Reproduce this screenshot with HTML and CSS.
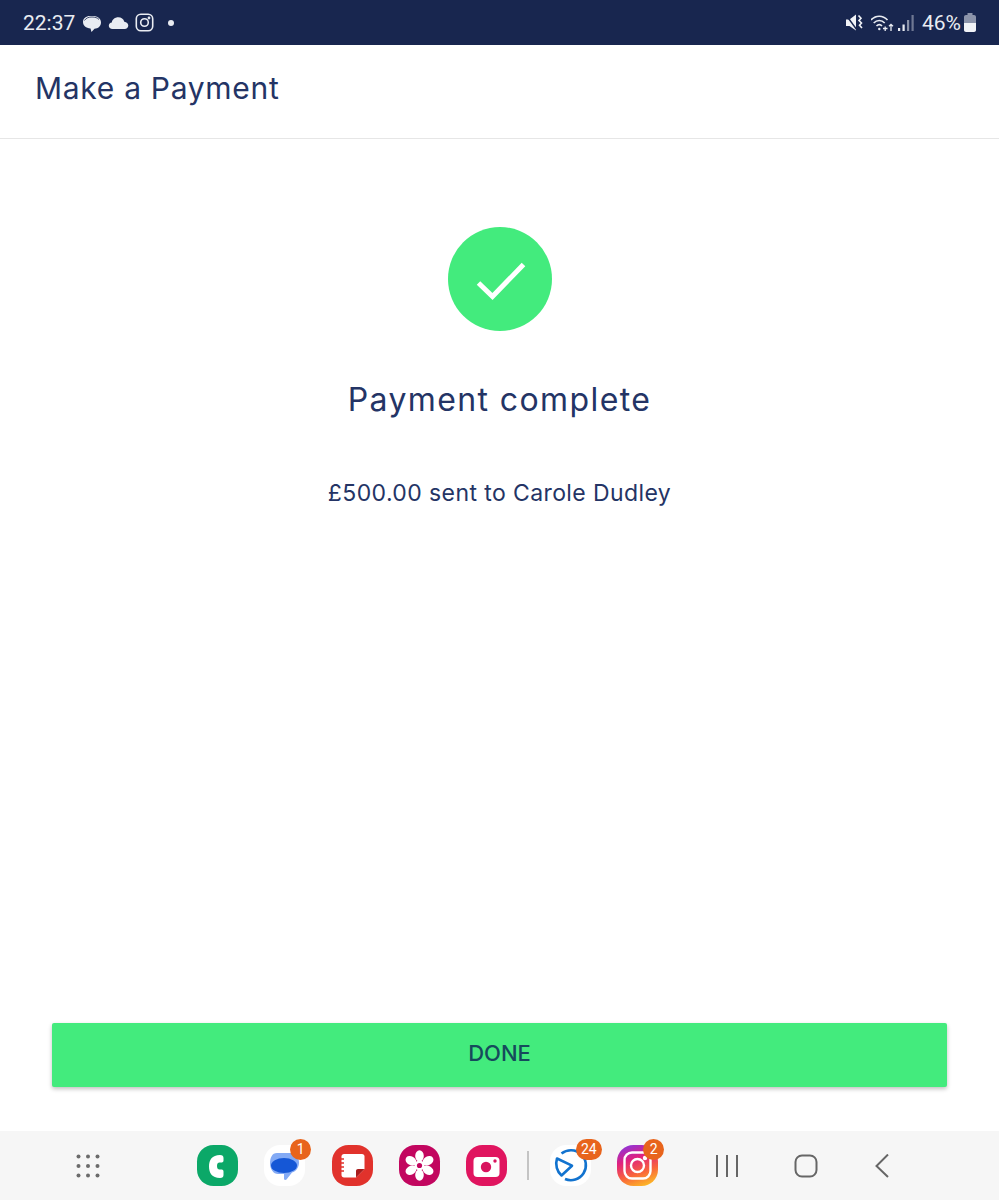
FILE: index.html
```html
<!DOCTYPE html>
<html lang="en">
<head>
  <meta charset="UTF-8" />
  <meta name="viewport" content="width=device-width, initial-scale=1" />
  <title>Make a Payment</title>
  <link rel="stylesheet" href="styles.css">
</head>
<body>
  <div class="status-bar">
    <div class="status-left">
      <span class="clock">22:37</span>
      <svg class="st-icon" width="20" height="20" viewBox="0 0 20 20">
        <path d="M1 9c0-3.500 3-6 7-6h3c4.500 0 8 2.500 8 6.500 0 3.800-3 6-6.500 6.200L9.500 19l-1-3.500C4 15 1 12.500 1 9z" fill="#e9ecf2"/>
        <path d="M2.500 7.500C4 4.800 7 4 10 4s5.500.8 7 2.500" fill="none" stroke="#18264f" stroke-width=".8"/>
      </svg>
      <svg class="st-icon" width="21" height="14" viewBox="0 0 21 14">
        <path d="M4.500 13C2.300 13 .8 11.500.8 9.700c0-1.700 1.300-3 3-3.200C4.300 3.500 7 1.300 10.300 1.300c2.900 0 5.300 1.800 6 4.400 2.300.2 4 1.800 4 3.900 0 1.900-1.500 3.400-3.700 3.400z" fill="#e9ecf2"/>
      </svg>
      <svg class="st-icon" width="19" height="19" viewBox="0 0 19 19" fill="none" stroke="#e9ecf2" stroke-width="1.600">
        <rect x="1.300" y="1.300" width="16.400" height="16.400" rx="4.500"/>
        <circle cx="9.500" cy="9.500" r="3.800"/>
        <circle cx="14" cy="5" r=".6" fill="#e9ecf2"/>
      </svg>
      <span class="dot"></span>
    </div>
    <div class="status-right">
      <svg width="17" height="17" viewBox="0 0 17 17">
        <path d="M0 5.500h3.500L10 .5v16L3.500 12H0z" fill="#f1f3f7"/>
        <path d="M0 1l11 15" stroke="#18264f" stroke-width="1.400"/>
        <path d="M12.500 1.500l2.500 2.800-2 2.200 2.500 2.500-2 2.200 2.500 2.800" fill="none" stroke="#f1f3f7" stroke-width="1.600"/>
      </svg>
      <svg class="wifi" width="23" height="18" viewBox="0 0 23 18" fill="none" stroke="#e9ecf2" stroke-width="1.600">
        <path d="M0 6c4.700-5 11.800-5 16.500 0"/>
        <path d="M2.700 9c3.200-3.300 7.900-3.300 11 0"/>
        <path d="M5.500 12c1.800-1.800 3.900-1.800 5.500 0"/>
        <circle cx="8.300" cy="15" r="1.200" fill="#e9ecf2" stroke="none"/>
        <path d="M12 14.500h4.500M14.200 12.500v4.500M20 17v-6.500M18 12.300l2-2 2 2" stroke-width="1.300"/>
      </svg>
      <svg class="signal" width="16" height="18" viewBox="0 0 16 18">
        <rect x="0" y="14" width="2.200" height="3" fill="#e9ecf2"/>
        <rect x="4.500" y="10.500" width="2.200" height="6.500" fill="#e9ecf2"/>
        <rect x="9" y="6" width="2.200" height="11" fill="#8b93a9"/>
        <rect x="13.500" y="1" width="2.200" height="16" fill="#6f7893"/>
      </svg>
      <span class="battery-text">46%</span>
      <svg class="battery" width="12" height="19" viewBox="0 0 12 19">
        <path d="M3.500 0h5v2H10c1.200 0 2 .8 2 2v6H0V4c0-1.200.8-2 2-2h1.500z" fill="#8c94aa"/>
        <path d="M0 10h12v7c0 1.200-.8 2-2 2H2c-1.200 0-2-.8-2-2z" fill="#f1f3f7"/>
      </svg>
    </div>
  </div>

  <header class="app-header">
    <h1>Make a Payment</h1>
  </header>

  <main class="content">
    <div class="success-circle">
      <svg width="104" height="104" viewBox="0 0 104 104">
        <path d="M30.500 56l14 13.500 31-32" fill="none" stroke="#fff" stroke-width="5"/>
      </svg>
    </div>
    <h2>Payment complete</h2>
    <p>£500.00 sent to Carole Dudley</p>
    <button type="button" class="done-btn">DONE</button>
  </main>

  <nav class="nav-bar">
    <svg class="apps" width="26" height="26" viewBox="0 0 26 26" fill="#6b6b6b">
      <circle cx="3.500" cy="3.500" r="2"/><circle cx="13" cy="3.500" r="2"/><circle cx="22.500" cy="3.500" r="2"/>
      <circle cx="3.500" cy="13" r="2"/><circle cx="13" cy="13" r="2"/><circle cx="22.500" cy="13" r="2"/>
      <circle cx="3.500" cy="22.500" r="2"/><circle cx="13" cy="22.500" r="2"/><circle cx="22.500" cy="22.500" r="2"/>
    </svg>

    <div class="dock">
      <div class="app app-phone">
        <svg width="41" height="41" viewBox="0 0 41 41">
          <path d="M23 10C15 10 12 15 12 21.500S15 33 23 33c2.500 0 3.500-1 3.500-3v-3.500c0-1.500-1-2-2.500-2h-1.500c-1.500 0-2.500-1-2.500-3.500s1-3.500 2.500-3.500H24c1.500 0 2.500-.5 2.500-2V13c0-2-1-3-3.500-3z" fill="#fff"/>
        </svg>
      </div>
      <div class="app app-messages">
        <svg width="41" height="41" viewBox="0 0 41 41">
          <path d="M13 8h14c5 0 8 4 8 9.500 0 5-3 9-7 10l-5.500 7c-1 .9-2.500.5-2.500-1V29h-6c-4.500 0-8-5-8-10.500S8 8 13 8z" fill="#83aaf5"/>
          <ellipse cx="20" cy="20.500" rx="13" ry="7.500" fill="#1557d6"/>
        </svg>
        <span class="badge">1</span>
      </div>
      <div class="app app-notes">
        <svg width="41" height="41" viewBox="0 0 41 41">
          <path d="M12 9h18c1.500 0 2.500 1 2.500 2.500V24L24 32.500H12c-1.500 0-2.500-1-2.500-2.500V11.500C9.500 10 10.500 9 12 9z" fill="#fff"/>
          <path d="M32.500 24H26c-1.200 0-2 .8-2 2v6.500z" fill="#a81c1c"/>
          <path d="M9 14h3M9 18h3M9 22h3M9 26h3" stroke="#e1322c" stroke-width="1.400"/>
        </svg>
      </div>
      <div class="app app-gallery">
        <svg width="41" height="41" viewBox="0 0 41 41" fill="#fff">
          <ellipse cx="20.500" cy="11" rx="4.300" ry="5.800"/>
          <ellipse cx="20.500" cy="30" rx="4.300" ry="5.800"/>
          <ellipse cx="12" cy="15.800" rx="5.800" ry="4.300" transform="rotate(30 12 15.800)"/>
          <ellipse cx="29" cy="15.800" rx="5.800" ry="4.300" transform="rotate(-30 29 15.800)"/>
          <ellipse cx="12" cy="25.200" rx="5.800" ry="4.300" transform="rotate(-30 12 25.200)"/>
          <ellipse cx="29" cy="25.200" rx="5.800" ry="4.300" transform="rotate(30 29 25.200)"/>
          <circle cx="20.500" cy="20.500" r="5"/>
          <circle cx="20.500" cy="20.500" r="2.600" fill="#c2065f"/>
        </svg>
      </div>
      <div class="app app-camera">
        <svg width="41" height="41" viewBox="0 0 41 41">
          <rect x="7.500" y="12" width="26" height="20" rx="4" fill="#fff"/>
          <circle cx="20" cy="22" r="5.200" fill="#d8145e"/>
          <circle cx="29" cy="16" r="1.700" fill="#d8145e"/>
        </svg>
      </div>
      <span class="dock-divider"></span>
      <div class="app app-pie">
        <svg width="41" height="41" viewBox="0 0 41 41" fill="none" stroke="#1273cf" stroke-width="2.600">
          <path d="M11.500 8.500A15 15 0 1 1 15 34"/>
          <path d="M7 13.500L22 20.700 11.500 30.500C7 27 5 19.500 7 13.500z" stroke-linejoin="round"/>
        </svg>
        <span class="badge badge-wide">24</span>
      </div>
      <div class="app app-insta">
        <svg width="41" height="41" viewBox="0 0 41 41" fill="none" stroke="#fff" stroke-width="2.400">
          <rect x="7.500" y="7.500" width="26" height="26" rx="7.500"/>
          <circle cx="20.500" cy="20.500" r="6.500"/>
          <circle cx="28" cy="13" r="1" fill="#fff"/>
        </svg>
        <span class="badge">2</span>
      </div>
    </div>

    <div class="nav-keys">
      <svg width="22" height="22" viewBox="0 0 22 22" fill="none" stroke="#666" stroke-width="2">
        <path d="M1 0v22M11 0v22M21 0v22"/>
      </svg>
      <svg width="24" height="24" viewBox="0 0 24 24" fill="none" stroke="#666" stroke-width="2">
        <rect x="1.500" y="1.500" width="21" height="21" rx="6.500"/>
      </svg>
      <svg width="16" height="24" viewBox="0 0 16 24" fill="none" stroke="#666" stroke-width="2">
        <path d="M14 .5L2.500 12 14 23"/>
      </svg>
    </div>
  </nav>
</body>
</html>
```

FILE: styles.css
```css
/* Reset and base */
* {
  box-sizing: border-box;
}
body {
  margin: 0;
  height: 1200px;
  display: flex;
  flex-direction: column;
  background-color: #fff;
  font-family: Inter, "Noto Sans", sans-serif;
  color: #243465;
}

/* Status bar */
.status-bar {
  height: 45px;
  flex: none;
  display: flex;
  justify-content: space-between;
  align-items: center;
  padding: 0 23px;
  background-color: #18264f;
  color: #e9ecf2;
  font-family: Roboto, sans-serif;
}
.status-left,
.status-right {
  display: flex;
  align-items: center;
}
.clock {
  font-size: 21px;
  margin-right: 7px;
}
.st-icon {
  margin-right: 6px;
}
.dot {
  width: 6px;
  height: 6px;
  border-radius: 50%;
  background-color: #e9ecf2;
  margin-left: 8px;
}
.wifi {
  margin-left: 8px;
}
.signal {
  margin-left: 4px;
}
.battery-text {
  font-size: 21px;
  margin-left: 8px;
}
.battery {
  margin-left: 3px;
}

/* App header */
.app-header {
  height: 94px;
  flex: none;
  padding: 0 35px;
  display: flex;
  align-items: center;
  border-bottom: 1px solid #e6e6e6;
}
.app-header h1 {
  margin: 0 0 7px;
  font-size: 30px;
  font-weight: 400;
  letter-spacing: 0.7px;
}

/* Confirmation */
.content {
  flex: 1;
  display: flex;
  flex-direction: column;
  align-items: center;
  padding: 88px 52px 44px;
}
.success-circle {
  width: 104px;
  height: 104px;
  border-radius: 50%;
  background-color: #43eb7d;
}
.success-circle svg {
  display: block;
}
.content h2 {
  margin: 49px 0 0;
  font-size: 32px;
  line-height: 40px;
  font-weight: 400;
  letter-spacing: 1.4px;
}
.content p {
  margin: 58px 0 0;
  font-size: 23px;
  line-height: 30px;
  letter-spacing: 0.4px;
}
.done-btn {
  width: 100%;
  height: 64px;
  margin-top: auto;
  padding: 0 0 4px;
  border: none;
  border-radius: 2px;
  background-color: #43eb7d;
  box-shadow: 0 2px 4px rgba(0, 0, 0, 0.25);
  color: #164a5c;
  font-family: inherit;
  font-size: 22px;
  font-weight: 500;
}

/* Android nav bar */
.nav-bar {
  height: 69px;
  flex: none;
  display: flex;
  align-items: center;
  padding: 0 0 0 75px;
  background-color: #f6f6f6;
}
.apps {
  margin-right: 96px;
}
.dock {
  display: flex;
  align-items: center;
  gap: 26.3px;
}
.app {
  position: relative;
  width: 41px;
  height: 41px;
  border-radius: 40%;
}
.app svg {
  display: block;
}
.app-phone { background-color: #0ba868; }
.app-messages,
.app-pie { background-color: #fff; }
.app-notes { background-color: #e1322c; }
.app-gallery { background-color: #c2065f; }
.app-camera { background-color: #e0155f; }
.app-insta {
  background: linear-gradient(340deg, #fdc324 5%, #f9653a 35%, #e0217f 65%, #8a35de 95%);
}
.badge {
  position: absolute;
  top: -6px;
  right: -6px;
  width: 21px;
  height: 21px;
  border-radius: 50%;
  background-color: #e8641c;
  color: #fff;
  font-family: Roboto, sans-serif;
  font-size: 14px;
  line-height: 21px;
  text-align: center;
}
.badge-wide {
  width: 26px;
  right: -11px;
  border-radius: 11px;
}
.dock-divider {
  width: 2px;
  height: 29px;
  margin: 0 -6px;
  background-color: #c4c4c4;
}
.nav-keys {
  display: flex;
  align-items: center;
  gap: 56px;
  margin-left: 58px;
}
```
